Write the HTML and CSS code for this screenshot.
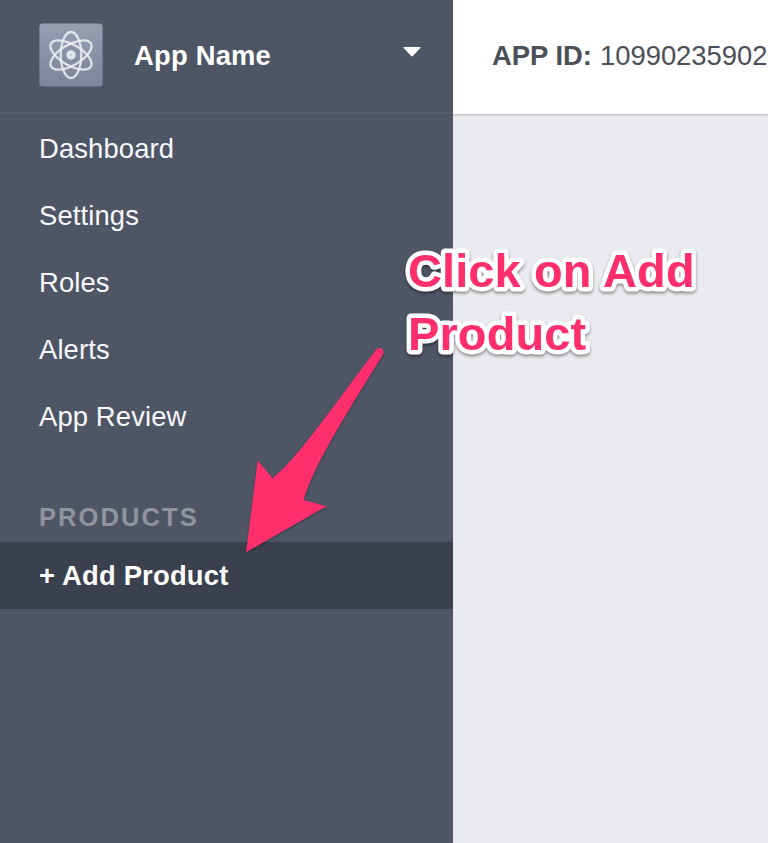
FILE: index.html
```html
<!DOCTYPE html>
<html lang="en">
<head>
<meta charset="utf-8">
<title>App Name</title>
<link rel="stylesheet" href="styles.css">
</head>
<body>
<div class="app">
  <aside class="sidebar">
    <header class="app-switcher">
      <svg class="app-icon" viewBox="0 0 64 64" aria-hidden="true">
        <defs>
          <linearGradient id="tile" x1="0" y1="0" x2="0" y2="1">
            <stop offset="0" stop-color="#979eb2"/>
            <stop offset="1" stop-color="#7b849b"/>
          </linearGradient>
        </defs>
        <rect x=".4" y=".4" width="63.2" height="63.2" rx="3.5" fill="url(#tile)"/>
        <g fill="none" stroke="#eceef2" stroke-opacity=".88" stroke-width="2.3">
          <ellipse cx="32" cy="32" rx="10.3" ry="23"/>
          <ellipse cx="32" cy="32" rx="10.3" ry="23" transform="rotate(60 32 32)"/>
          <ellipse cx="32" cy="32" rx="10.3" ry="23" transform="rotate(120 32 32)"/>
        </g>
        <circle cx="32" cy="32" r="4.7" fill="#e3e6ec"/>
        <circle cx="32" cy="32" r="1.2" fill="#c4c8d3"/>
      </svg>
      <span class="app-name">App Name</span>
      <svg class="caret" viewBox="0 0 18 10" aria-hidden="true"><path d="M1 0H17Q18.3 0 17.4 1L9.8 9Q9 9.8 8.2 9L.6 1Q-.3 0 1 0Z" fill="#fff"/></svg>
    </header>
    <nav class="nav">
      <a class="nav-item">Dashboard</a>
      <a class="nav-item">Settings</a>
      <a class="nav-item">Roles</a>
      <a class="nav-item">Alerts</a>
      <a class="nav-item">App Review</a>
      <h2 class="nav-heading">PRODUCTS</h2>
      <a class="nav-item active">+ Add Product</a>
    </nav>
  </aside>
  <main class="main">
    <header class="topbar"><b class="id-label">APP ID:</b><span class="id-value">10990235902</span></header>
  </main>
  <svg class="arrow" viewBox="240 340 150 220" aria-hidden="true">
    <path d="M376.5 349.3C379.5 346.5 384.5 349 383.4 353.5L382.7 355C355 400 312 467 303.7 500L326.5 506.3L246 552.3L257.6 460.5L272.5 478.3C298 459 344 391 376.5 349.3Z" fill="#ff2f6e"/>
  </svg>
  <svg class="callout" viewBox="0 0 320 140">
    <text x="18" y="57">Click on Add</text>
    <text x="18" y="120">Product</text>
  </svg>
</div>
</body>
</html>
```
FILE: styles.css
```css
* { box-sizing: border-box; }

body {
  margin: 0;
  font-family: "Liberation Sans", Arial, sans-serif;
  font-size: 27.4px;
}

.app {
  position: relative;
  display: flex;
  width: 768px;
  height: 843px;
  overflow: hidden;
  background: #e9ebee;
}

.sidebar {
  flex: 0 0 453px;
  background: #4e5665;
  color: #fff;
}

.app-switcher {
  display: flex;
  align-items: center;
  height: 114px;
  padding: 0 32px 2px 39px;
  border-bottom: 2px solid #565d6c;
}

.app-icon { width: 64px; height: 64px; }

.app-name {
  margin: 2px 0 0 31px;
  font-weight: bold;
  letter-spacing: .2px;
}

.caret {
  width: 18px;
  height: 10px;
  margin: 0 0 6px auto;
}

.nav { display: flex; flex-direction: column; }

.nav-item {
  height: 67px;
  padding-left: 39px;
  line-height: 69px;
  letter-spacing: .13px;
  color: #f8f9fa;
}

.nav-heading {
  height: 93px;
  margin: 0;
  padding: 35px 0 0 39px;
  font-size: 25.5px;
  line-height: 66px;
  letter-spacing: 2.1px;
  color: #8f949e;
}

.active {
  background: #3a404e;
  color: #fff;
  font-weight: bold;
  line-height: 68px;
  letter-spacing: .2px;
}

.main { flex: 1; min-width: 0; }

.topbar {
  display: flex;
  align-items: center;
  gap: 8px;
  height: 114px;
  padding: 0 0 3px 39px;
  background: #fff;
  box-shadow: 0 1px 2px rgba(0, 0, 0, .22);
  color: #4b4f56;
  white-space: nowrap;
  clip-path: inset(0 0 -5px 0);
}

.arrow {
  position: absolute;
  left: 240px;
  top: 340px;
  width: 150px;
  height: 220px;
  filter: drop-shadow(0 1.5px 1px rgba(0, 0, 0, .35));
}

.callout {
  position: absolute;
  left: 390px;
  top: 230px;
  width: 320px;
  height: 140px;
  font-size: 47px;
  font-weight: bold;
  letter-spacing: .1px;
  fill: #ff2f6e;
  stroke: #fff;
  stroke-width: 9px;
  stroke-linejoin: round;
  paint-order: stroke fill;
  filter: drop-shadow(0 2px 1.5px rgba(0, 0, 0, .4));
}
```
